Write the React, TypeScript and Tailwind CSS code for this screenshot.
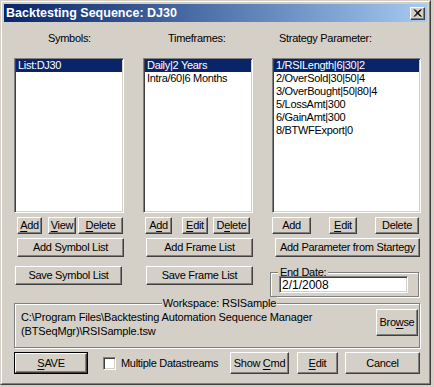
import React from "react";

const FONT = "font-['Liberation_Sans',Arial,Helvetica,sans-serif]";

function Btn({ className = "", children }: { className?: string; children?: React.ReactNode }) {
  return (
    <div
      className={`flex items-center justify-center shrink-0 bg-[#d4d0c8] border border-t-white border-l-white border-r-[#404040] border-b-[#404040] shadow-[inset_-1px_-1px_0_#808080] text-black text-[11px] leading-none tracking-[-0.3px] whitespace-nowrap ${className}`}
    >
      <span>{children}</span>
    </div>
  );
}

function U({ children }: { children: React.ReactNode }) {
  return <span className="underline underline-offset-[2px] decoration-1">{children}</span>;
}

function ListBox({ items, className = "" }: { items: string[]; className?: string }) {
  return (
    <div
      className={`h-[155px] bg-white border border-t-[#808080] border-l-[#808080] border-r-white border-b-white shadow-[inset_1px_1px_0_#404040,inset_-1px_-1px_0_#d4d0c8] px-[1px] pt-0 flex flex-col ${className}`}
    >
      {items.map((t, i) => (
        <div
          key={t}
          className={`h-[13px] leading-[13px] pl-[2px] text-[11px] tracking-[-0.3px] whitespace-nowrap ${
            i === 0 ? "bg-[#0a246a] text-white" : "text-black"
          }`}
        >
          {t}
        </div>
      ))}
    </div>
  );
}

export default function App() {
  return (
    <div className={`w-[434px] h-[387px] bg-[#d4d0c8] overflow-hidden ${FONT}`}>
      <div className="w-[431px] h-[385px] border border-t-[#d4d0c8] border-l-[#d4d0c8] border-r-[#404040] border-b-[#404040]">
        <div className="h-full border border-t-white border-l-white border-r-[#808080] border-b-[#808080] p-[2px] flex flex-col">
          {/* Title bar */}
          <div className="h-[18px] shrink-0 flex items-center bg-gradient-to-r from-[#0a246a] to-[#a6caf0] pl-[2px] pr-[2px]">
            <span className="text-white font-bold text-[12.5px] leading-none">
              Backtesting Sequence: DJ30
            </span>
            <div className="ml-auto w-[15px] h-[13px] bg-[#d4d0c8] border border-t-white border-l-white border-r-[#404040] border-b-[#404040] shadow-[inset_-1px_-1px_0_#808080] flex items-center justify-center">
              <svg width="9" height="8" viewBox="0 0 9 8">
                <path d="M1 0.5 L7.5 7.5 M2 0.5 L8.5 7.5 M7.5 0.5 L1 7.5 M8.5 0.5 L2 7.5" stroke="black" strokeWidth="1" fill="none" />
              </svg>
            </div>
          </div>

          {/* Body */}
          <div className="flex flex-col pl-[10px] pt-[10px] text-black text-[11px] tracking-[-0.3px]">
            <div className="flex gap-[19px]">
              {/* Symbols */}
              <div className="w-[110px] flex flex-col">
                <div className="h-[13px] leading-[13px] mb-[13px] pl-[34px]">Symbols:</div>
                <ListBox items={["List:DJ30"]} />
                <div className="flex mt-[4px] pl-[3px]">
                  <Btn className="w-[25px] h-[17px]"><U>A</U>dd</Btn>
                  <Btn className="w-[28px] h-[17px] ml-[6px]"><U>V</U>iew</Btn>
                  <Btn className="w-[45px] h-[17px] ml-[2px]"><U>D</U>elete</Btn>
                </div>
                <Btn className="w-[107px] h-[19px] mt-[4px] ml-[3px]">Add Symbol List</Btn>
                <Btn className="w-[107px] h-[19px] mt-[9px] ml-[1px]">Save Symbol List</Btn>
              </div>

              {/* Timeframes */}
              <div className="w-[110px] flex flex-col">
                <div className="h-[13px] leading-[13px] mb-[13px] pl-[25px]">Timeframes:</div>
                <ListBox items={["Daily|2 Years", "Intra/60|6 Months"]} />
                <div className="flex mt-[4px] pl-[2px]">
                  <Btn className="w-[27px] h-[17px]">A<U>d</U>d</Btn>
                  <Btn className="w-[26px] h-[17px] ml-[10px]"><U>E</U>dit</Btn>
                  <Btn className="w-[37px] h-[17px] ml-[5px]">D<U>e</U>lete</Btn>
                </div>
                <Btn className="w-[107px] h-[19px] mt-[4px] ml-[3px]">Add Frame List</Btn>
                <Btn className="w-[107px] h-[19px] mt-[9px] ml-[3px]">Save Frame List</Btn>
              </div>

              {/* Strategy */}
              <div className="w-[149px] flex flex-col">
                <div className="h-[13px] leading-[13px] mb-[13px] pl-[7px]">Strategy Parameter:</div>
                <ListBox
                  items={[
                    "1/RSILength|6|30|2",
                    "2/OverSold|30|50|4",
                    "3/OverBought|50|80|4",
                    "5/LossAmt|300",
                    "6/GainAmt|300",
                    "8/BTWFExport|0",
                  ]}
                />
                <div className="flex mt-[4px]">
                  <Btn className="w-[39px] h-[17px]">Add</Btn>
                  <Btn className="w-[28px] h-[17px] ml-[18px]"><U>E</U>dit</Btn>
                  <Btn className="w-[44px] h-[17px] ml-[18px]">Delete</Btn>
                </div>
                <Btn className="w-[145px] h-[19px] mt-[4px] ml-[3px]">Add Parameter from Startegy</Btn>
                <fieldset className="w-[149px] -ml-[2px] mt-[9px] border border-[#808080] shadow-[inset_1px_1px_0_white,1px_1px_0_white] pl-[7px] pb-[3px]">
                  <legend className="px-[2px] h-[13px] leading-[13px] bg-[#d4d0c8]">End Date:</legend>
                  <div className="-mt-[3px] ml-[1px] w-[129px] h-[17px] bg-white border border-t-[#808080] border-l-[#808080] border-r-white border-b-white shadow-[inset_1px_1px_0_#404040,inset_-1px_-1px_0_#d4d0c8] pl-[2px] flex items-center text-[12px] tracking-normal">
                    2/1/2008
                  </div>
                </fieldset>
              </div>
            </div>

            {/* Workspace */}
            <fieldset className="w-[406px] mt-0 border border-[#808080] shadow-[inset_1px_1px_0_white,1px_1px_0_white] pl-[6px] pr-[1px] pb-[9px] tracking-[-0.15px]">
              <legend className="mx-auto px-[1px] h-[13px] leading-[13px] bg-[#d4d0c8]">Workspace: RSISample</legend>
              <div className="flex items-start">
                <div className="leading-[14px]">
                  <div>C:\Program Files\Backtesting Automation Sequence Manager</div>
                  <div>(BTSeqMgr)\RSISample.tsw</div>
                </div>
                <Btn className="ml-auto w-[42px] h-[27px] -mt-[1px]">Bro<U>w</U>se</Btn>
              </div>
            </fieldset>

            {/* Bottom row */}
            <div className="w-[406px] flex items-center mt-[4px]">
              <div className="w-[74px] h-[22px] border border-black flex">
                <Btn className="w-full h-full"><U>S</U>AVE</Btn>
              </div>
              <div className="ml-[15px] w-[13px] h-[13px] bg-white border border-t-[#808080] border-l-[#808080] border-r-white border-b-white shadow-[inset_1px_1px_0_#404040,inset_-1px_-1px_0_#d4d0c8]" />
              <span className="ml-[5px] whitespace-nowrap">Multiple Datastreams</span>
              <div className="flex-1" />
              <Btn className="w-[59px] h-[22px]">Show <U>C</U>md</Btn>
              <Btn className="w-[41px] h-[22px] ml-[8px]"><U>E</U>dit</Btn>
              <Btn className="w-[75px] h-[22px] ml-[7px]">Cancel</Btn>
            </div>
          </div>
        </div>
      </div>
    </div>
  );
}
